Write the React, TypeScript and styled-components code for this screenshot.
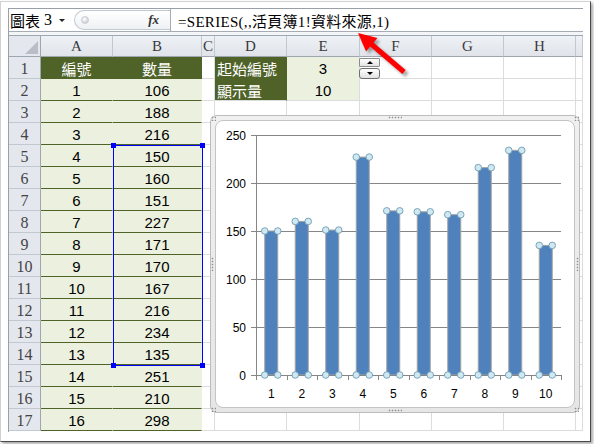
import React from 'react';
import styled, { createGlobalStyle } from 'styled-components';

const GlobalStyle = createGlobalStyle`
  html, body { margin: 0; padding: 0; background: #fff; }
  body { width: 594px; height: 444px; overflow: hidden; font-family: "Liberation Sans", "Noto Sans CJK TC", sans-serif; }
`;

const DARK = '#4f6228';
const LIGHT = '#ebf1de';
const GRID = '#dadcdd';

const Page = styled.div`
  position: relative;
  width: 594px;
  height: 444px;
  background: #fff;
  overflow: hidden;
`;

const Frame = styled.div`
  margin-top: 1px;
  width: 591px;
  height: 441px;
  box-sizing: border-box;
  border: 1px solid #d2d2d2;
  border-right-color: #4a4a4a;
  border-bottom-color: #4a4a4a;
  padding: 6px 7px 9px 7px;
  box-shadow: 2px 2px 3px rgba(0, 0, 0, 0.35);
  background: #fff;
`;

const Sheet = styled.div`
  position: relative;
  width: 575px;
  height: 424px;
  box-sizing: border-box;
  border-left: 1px solid #9aa0a8;
  border-top: 1px solid #9aa0a8;
  display: flex;
  flex-direction: column;
  overflow: hidden;
`;

const FormulaBar = styled.div`
  display: flex;
  height: 23px;
  flex: none;
  box-sizing: border-box;
  border-bottom: 1px solid #a5acb5;
  background: #fff;
`;

const NameBox = styled.div`
  width: 61px;
  display: flex;
  align-items: center;
  padding-left: 1px;
  box-sizing: border-box;
  font-family: "Noto Sans CJK TC", sans-serif;
  font-size: 15px;
  color: #000;
  gap: 4px;
  white-space: nowrap;
`;

const NameDigit = styled.span`
  font-family: "Liberation Serif", serif;
  font-size: 16px;
`;

const DropArrow = styled.span`
  width: 0;
  height: 0;
  margin-left: 3px;
  border-left: 3px solid transparent;
  border-right: 3px solid transparent;
  border-top: 3px solid #222;
`;

const Tools = styled.div`
  width: 100px;
  display: flex;
  align-items: stretch;
  padding: 1px 0 1px 4px;
  box-sizing: border-box;
`;

const Pill = styled.div`
  flex: 1;
  display: flex;
  align-items: center;
  justify-content: space-between;
  border: 1px solid #c3c9d1;
  border-right: none;
  border-radius: 10px 0 0 10px;
  background: linear-gradient(#ffffff, #eef1f4);
  padding: 0 11px 0 6px;
`;

const Knob = styled.span`
  width: 6px;
  height: 6px;
  border-radius: 50%;
  background: radial-gradient(circle at 40% 35%, #ffffff, #b9c0c8);
  border: 1px solid #c9ced5;
`;

const Fx = styled.span`
  font-family: "Liberation Serif", serif;
  font-style: italic;
  font-weight: bold;
  font-size: 13px;
  color: #333;
`;

const FormulaInput = styled.div`
  flex: 1;
  display: flex;
  align-items: center;
  border-left: 1px solid #a5acb5;
  padding-left: 7px;
  font-family: "Liberation Serif", "Noto Sans CJK TC", serif;
  font-size: 15px;
  letter-spacing: 0.3px;
  color: #000;
  white-space: nowrap;
`;

const BarGap = styled.div`
  height: 4px;
  flex: none;
  box-sizing: border-box;
  border-bottom: 1px solid #9ea6b0;
  background: #f4f5f7;
`;

const Grid = styled.div`
  display: grid;
  grid-template-columns: 32px 72px 89px 13px 72px 73px 72px 72px 72px 1fr;
  grid-template-rows: 21px repeat(17, 22px);
`;

const Corner = styled.div`
  background: #e4e8ee;
  border-right: 1px solid #9ea6b0;
  border-bottom: 1px solid #9ea6b0;
  display: flex;
  align-items: flex-end;
  justify-content: flex-end;
  padding: 0 2px 2px 0;
`;

const ColHead = styled.div`
  background: linear-gradient(#eef1f5, #e0e4ea);
  border-right: 1px solid #c2c8d0;
  border-bottom: 1px solid #9ea6b0;
  display: flex;
  align-items: center;
  justify-content: center;
  font-family: "Liberation Serif", serif;
  font-size: 15px;
  color: #3a3a3a;
  padding-top: 1px;
`;

const RowHead = styled.div`
  background: #e4e8ee;
  border-right: 1px solid #9ea6b0;
  border-bottom: 1px solid #c2c8d0;
  display: flex;
  align-items: center;
  justify-content: center;
  font-family: "Liberation Serif", serif;
  font-size: 16px;
  color: #444;
  padding-top: 3px;
  box-sizing: border-box;
`;

type Tone = 'plain' | 'light' | 'dark';

const Cell = styled.div<{ $tone: Tone; $bottom: string; $right: string; $left?: boolean }>`
  box-sizing: border-box;
  background: ${(p) => (p.$tone === 'dark' ? DARK : p.$tone === 'light' ? LIGHT : '#fff')};
  border-bottom: 1px solid ${(p) => p.$bottom};
  border-right: 1px solid ${(p) => p.$right};
  display: flex;
  align-items: center;
  justify-content: ${(p) => (p.$left ? 'flex-start' : 'center')};
  padding: 2px 0 0 ${(p) => (p.$left ? '2px' : '0')};
  font-family: ${(p) =>
    p.$tone === 'dark' ? '"Noto Sans CJK TC", sans-serif' : '"Liberation Sans", "Noto Sans CJK TC", sans-serif'};
  font-size: 15px;
  line-height: 1;
  color: ${(p) => (p.$tone === 'dark' ? '#fff' : '#000')};
  white-space: nowrap;
`;

const Selection = styled.div`
  position: absolute;
  left: 104px;
  top: 136px;
  width: 90px;
  height: 221px;
  box-sizing: border-box;
  border: 1px solid #0000ff;
  pointer-events: none;
`;

const SelHandle = styled.span<{ $x: 'l' | 'r'; $y: 't' | 'b' }>`
  position: absolute;
  width: 5px;
  height: 5px;
  background: #0000ff;
  ${(p) => (p.$x === 'l' ? 'left: -3px;' : 'right: -3px;')}
  ${(p) => (p.$y === 't' ? 'top: -3px;' : 'bottom: -3px;')}
`;

const Spinner = styled.div`
  position: absolute;
  left: 350px;
  top: 49px;
  width: 21px;
  display: flex;
  flex-direction: column;
  gap: 1px;
`;

const SpinButton = styled.div<{ $down?: boolean }>`
  height: ${(p) => (p.$down ? '11px' : '9px')};
  box-sizing: border-box;
  border: 1px solid ${(p) => (p.$down ? '#707070' : '#8c8c8c')};
  border-radius: ${(p) => (p.$down ? '3px' : '1px')};
  background: linear-gradient(#ffffff, #e2e2e2);
  display: flex;
  align-items: center;
  justify-content: center;
`;

const Tri = styled.span<{ $down?: boolean }>`
  width: 0;
  height: 0;
  border-left: 3px solid transparent;
  border-right: 3px solid transparent;
  ${(p) => (p.$down ? 'border-top: 3px solid #000;' : 'border-bottom: 3px solid #000;')}
`;

const ChartFrame = styled.div`
  position: absolute;
  left: 201px;
  top: 106px;
  width: 370px;
  height: 298px;
  box-sizing: border-box;
  border: 1px solid #bcbcbc;
  border-radius: 7px;
  background: linear-gradient(#f0f0f0, #e6e6e6);
  padding: 4px;
`;

const ChartInner = styled.div`
  width: 100%;
  height: 100%;
  box-sizing: border-box;
  border: 1px solid #c4c4c4;
  border-radius: 8px;
  background: #fff;
  overflow: hidden;
`;

const Dots = styled.span<{ $w: number; $h: number }>`
  position: absolute;
  width: ${(p) => p.$w}px;
  height: ${(p) => p.$h}px;
  background-image: radial-gradient(circle, #8f8f8f 0.7px, transparent 1.1px);
  background-size: 3px 3px;
`;

const Overlay = styled.svg`
  position: absolute;
  left: 0;
  top: 0;
  pointer-events: none;
`;

const ab: [string, string][] = [
  ['1', '106'], ['2', '188'], ['3', '216'], ['4', '150'], ['5', '160'], ['6', '151'],
  ['7', '227'], ['8', '171'], ['9', '170'], ['10', '167'], ['11', '216'], ['12', '234'],
  ['13', '135'], ['14', '251'], ['15', '210'], ['16', '298'],
];

const cols = ['A', 'B', 'C', 'D', 'E', 'F', 'G', 'H'];
const values = [150, 160, 151, 227, 171, 170, 167, 216, 234, 135];

function Row({ r }: { r: number }) {
  const cells: React.ReactNode[] = [];
  const isHeader = r === 1;
  const aTone: Tone = isHeader ? 'dark' : 'light';
  const abLine = DARK;
  const aBg = isHeader ? DARK : LIGHT;
  cells.push(
    <RowHead key="h">{r}</RowHead>,
    <Cell key="a" $tone={aTone} $bottom={abLine} $right={aBg}>
      {isHeader ? '編號' : ab[r - 2][0]}
    </Cell>,
    <Cell key="b" $tone={aTone} $bottom={abLine} $right={aBg}>
      {isHeader ? '數量' : ab[r - 2][1]}
    </Cell>,
    <Cell key="c" $tone="plain" $bottom={GRID} $right={GRID} />
  );
  if (r === 1 || r === 2) {
    cells.push(
      <Cell key="d" $tone="dark" $bottom={r === 1 ? DARK : GRID} $right={DARK} $left>
        {r === 1 ? '起始編號' : '顯示量'}
      </Cell>,
      <Cell key="e" $tone="light" $bottom={r === 1 ? LIGHT : GRID} $right={GRID}>
        {r === 1 ? '3' : '10'}
      </Cell>
    );
  } else {
    cells.push(
      <Cell key="d" $tone="plain" $bottom={GRID} $right={GRID} />,
      <Cell key="e" $tone="plain" $bottom={GRID} $right={GRID} />
    );
  }
  cells.push(
    <Cell key="f" $tone="plain" $bottom={GRID} $right={GRID} />,
    <Cell key="g" $tone="plain" $bottom={GRID} $right={GRID} />,
    <Cell key="h2" $tone="plain" $bottom={GRID} $right={GRID} />,
    <Cell key="i" $tone="plain" $bottom={GRID} $right={GRID} />
  );
  return <>{cells}</>;
}

function ChartPlot() {
  const x0 = 256;
  const x1 = 561;
  const base = 375;
  const step = (x1 - x0) / 10;
  const scale = 0.96;
  const ticks = [0, 50, 100, 150, 200, 250];
  return (
    <svg width="358" height="286" viewBox="216 121 358 286" style={{ display: 'block' }}>
      {ticks.map((t) => {
        const y = base - t * scale + 0.5;
        return (
          <g key={t}>
            {t > 0 && <line x1={x0} x2={x1} y1={y} y2={y} stroke="#868686" strokeWidth="1" />}
            <line x1={x0 - 5} x2={x0} y1={y} y2={y} stroke="#868686" strokeWidth="1" />
            <text
              x={246}
              y={y + 4}
              textAnchor="end"
              fontFamily='"Liberation Sans", sans-serif'
              fontSize="12"
              fill="#000"
            >
              {t}
            </text>
          </g>
        );
      })}
      <line x1={x0 + 0.5} x2={x0 + 0.5} y1={135} y2={base + 1} stroke="#868686" strokeWidth="1" />
      {values.map((v, i) => {
        const cx = x0 + step * (i + 0.5);
        const top = base - v * scale;
        const l = cx - 6.5;
        return (
          <g key={i}>
            <rect x={l} y={top} width={13} height={base - top} fill="#4f81bd" stroke="#a3a3a3" strokeWidth="1" />
            <text
              x={cx}
              y={398}
              textAnchor="middle"
              fontFamily='"Liberation Sans", sans-serif'
              fontSize="12"
              fill="#000"
            >
              {i + 1}
            </text>
          </g>
        );
      })}
      <line x1={x0} x2={x1} y1={base + 0.5} y2={base + 0.5} stroke="#868686" strokeWidth="1" />
      {Array.from({ length: 11 }).map((_, i) => {
        const x = Math.round(x0 + step * i) + 0.5;
        return <line key={i} x1={x} x2={x} y1={base} y2={base + 5} stroke="#868686" strokeWidth="1" />;
      })}
      {values.map((v, i) => {
        const cx = x0 + step * (i + 0.5);
        const top = base - v * scale;
        return [cx - 6.5, cx + 6.5].flatMap((x, k) =>
          [top, base].map((y, m) => (
            <circle key={`${i}-${k}-${m}`} cx={x} cy={y} r={3.3} fill="#cfe8f1" stroke="#6f9db3" strokeWidth="0.9" />
          ))
        );
      })}
    </svg>
  );
}

function Arrow() {
  return (
    <Overlay width="594" height="444" viewBox="0 0 594 444">
      <defs>
        <filter id="sh" x="-20%" y="-20%" width="140%" height="140%">
          <feGaussianBlur stdDeviation="1.5" />
        </filter>
      </defs>
      <g transform="translate(3,3)" opacity="0.35" filter="url(#sh)">
        <line x1="404" y1="72" x2="370" y2="43" stroke="#000" strokeWidth="5" />
        <polygon points="358,33 377,38 366,51" fill="#000" />
      </g>
      <line x1="404" y1="72" x2="370" y2="43" stroke="#ff0000" strokeWidth="5" />
      <polygon points="358,33 377.5,38 366,51.5" fill="#ff0000" />
    </Overlay>
  );
}

export default function App() {
  return (
    <>
      <GlobalStyle />
      <Page>
        <Frame>
          <Sheet>
            <FormulaBar>
              <NameBox>
                <span>圖表</span>
                <NameDigit>3</NameDigit>
                <DropArrow />
              </NameBox>
              <Tools>
                <Pill>
                  <Knob />
                  <Fx>fx</Fx>
                </Pill>
              </Tools>
              <FormulaInput>=SERIES(,,活頁簿1!資料來源,1)</FormulaInput>
            </FormulaBar>
            <BarGap />
            <Grid>
              <Corner>
                <svg width="13" height="13" viewBox="0 0 13 13">
                  <polygon points="13,0 13,13 0,13" fill="#b9bec6" />
                </svg>
              </Corner>
              {cols.map((c) => (
                <ColHead key={c}>{c}</ColHead>
              ))}
              <ColHead />
              {Array.from({ length: 17 }).map((_, i) => (
                <Row key={i} r={i + 1} />
              ))}
            </Grid>
            <Selection>
              <SelHandle $x="l" $y="t" />
              <SelHandle $x="r" $y="t" />
              <SelHandle $x="l" $y="b" />
              <SelHandle $x="r" $y="b" />
            </Selection>
            <Spinner>
              <SpinButton>
                <Tri />
              </SpinButton>
              <SpinButton $down>
                <Tri $down />
              </SpinButton>
            </Spinner>
            <ChartFrame>
              <ChartInner>
                <ChartPlot />
              </ChartInner>
              <Dots $w={5} $h={5} style={{ left: 0, top: 0 }} />
              <Dots $w={14} $h={3} style={{ left: 177, top: 0 }} />
              <Dots $w={5} $h={5} style={{ right: 0, top: 0 }} />
              <Dots $w={3} $h={14} style={{ left: 0, top: 141 }} />
              <Dots $w={3} $h={14} style={{ right: 0, top: 141 }} />
              <Dots $w={5} $h={5} style={{ left: 0, bottom: 0 }} />
              <Dots $w={14} $h={3} style={{ left: 177, bottom: 0 }} />
              <Dots $w={5} $h={5} style={{ right: 0, bottom: 0 }} />
            </ChartFrame>
          </Sheet>
        </Frame>
        <Arrow />
      </Page>
    </>
  );
}
